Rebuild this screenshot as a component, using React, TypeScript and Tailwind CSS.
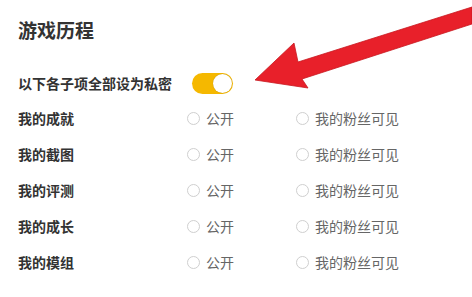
import React, { useState } from 'react';

const ROWS = ['我的成就', '我的截图', '我的评测', '我的成长', '我的模组'];

type Vis = 'public' | 'fans' | null;

const Radio: React.FC<{ label: string; checked: boolean; onClick: () => void }> = ({ label, checked, onClick }) => (
  <button onClick={onClick} className="flex items-center gap-[6px] text-[14px] text-[#666]">
    <span className="w-[13px] h-[13px] rounded-full border border-[#cfcfcf] bg-white flex items-center justify-center">
      {checked && <span className="w-[7px] h-[7px] rounded-full bg-[#f5b800]" />}
    </span>
    <span>{label}</span>
  </button>
);

export default function App() {
  const [priv, setPriv] = useState(true);
  const [vis, setVis] = useState<Record<string, Vis>>({});

  return (
    <div
      className="relative w-[472px] h-[297px] overflow-hidden bg-white px-[18px] pt-[20px]"
      style={{ fontFamily: '"Noto Sans CJK SC", "Noto Sans", sans-serif' }}
    >
      <h2 className="h-[20px] leading-[20px] text-[19px] font-bold text-[#333] mb-[26px]">游戏历程</h2>

      <div className="flex items-center h-[34px]">
        <span className="w-[174px] text-[14px] font-bold text-[#333]">以下各子项全部设为私密</span>
        <button
          onClick={() => setPriv(!priv)}
          className={`w-[41px] h-[21px] rounded-full p-[1px] flex items-center ${priv ? 'bg-[#f5b800] justify-end' : 'bg-[#ddd] justify-start'}`}
        >
          <span className="w-[19px] h-[19px] rounded-full bg-white shadow-[0_0_1px_rgba(0,0,0,0.3)]" />
        </button>
      </div>

      {ROWS.map((name) => (
        <div key={name} className="flex items-center h-[36px]">
          <span className="w-[169px] text-[14px] font-bold text-[#333]">{name}</span>
          <div className="w-[109px]">
            <Radio label="公开" checked={vis[name] === 'public'} onClick={() => setVis({ ...vis, [name]: 'public' })} />
          </div>
          <Radio label="我的粉丝可见" checked={vis[name] === 'fans'} onClick={() => setVis({ ...vis, [name]: 'fans' })} />
        </div>
      ))}

      {/* annotation arrow */}
      <svg className="absolute inset-0 pointer-events-none" width="472" height="297" viewBox="0 0 472 297">
        <polygon
          points="255,80 294,43 298,62 472,7 472,24 302,79 308,88"
          fill="#e8202a"
          stroke="#c81820"
          strokeWidth="0.8"
          strokeLinejoin="round"
        />
      </svg>
    </div>
  );
}
